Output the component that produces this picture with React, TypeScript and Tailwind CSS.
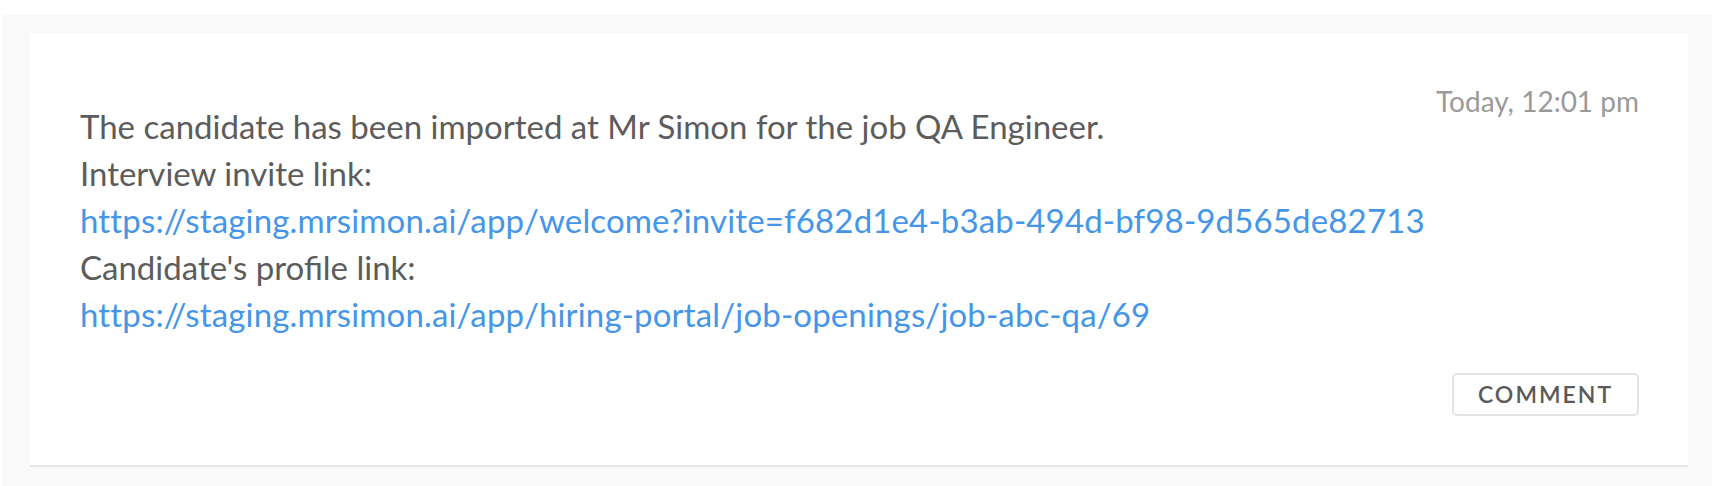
import React from "react";

const inviteUrl =
  "https://staging.mrsimon.ai/app/welcome?invite=f682d1e4-b3ab-494d-bf98-9d565de82713";
const profileUrl =
  "https://staging.mrsimon.ai/app/hiring-portal/job-openings/job-abc-qa/69";

export default function App() {
  return (
    <div className="bg-white pt-[14px] pl-[2px] font-['Lato',sans-serif]">
      <div className="bg-[#f9f9f9] pt-[19px] pb-[19px] pl-[28px] pr-[24px]">
        <div className="bg-white border-b-2 border-[#e6e6e6] pt-[54px] pb-[49px] pl-[50px] pr-[49px]">
          <div className="flex justify-end text-[28px] leading-none text-[#9a9a9a]">
            Today, 12:01 pm
          </div>
          <div className="-mt-[12px] text-[33px] leading-[47px] text-[#5c5c5c]">
            <p>The candidate has been imported at Mr Simon for the job QA Engineer.</p>
            <p>Interview invite link:</p>
            <p>
              <a href="#" className="tracking-[0.15px] text-[#4596e8]">
                {inviteUrl}
              </a>
            </p>
            <p>Candidate's profile link:</p>
            <p>
              <a href="#" className="tracking-[0.15px] text-[#4596e8]">
                {profileUrl}
              </a>
            </p>
          </div>
          <div className="mt-[35px] flex justify-end">
            <button className="h-[43px] w-[187px] rounded-[5px] border-2 border-[#e3e3e3] bg-white text-[23px] font-semibold tracking-[2px] text-[#5a5a5a]">
              COMMENT
            </button>
          </div>
        </div>
      </div>
    </div>
  );
}
